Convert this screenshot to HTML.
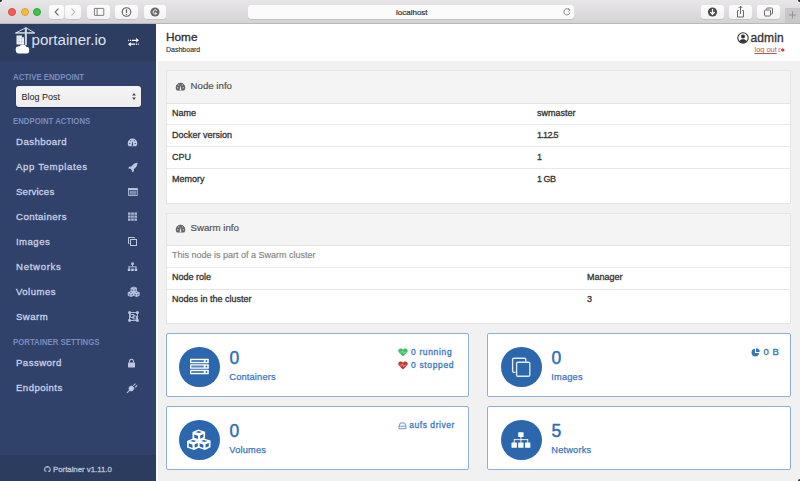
<!DOCTYPE html>
<html><head><meta charset="utf-8">
<style>
*{margin:0;padding:0;box-sizing:border-box}
html,body{width:800px;height:481px;overflow:hidden;background:#f1f1f1;font-family:"Liberation Sans",sans-serif}
.a{position:absolute;white-space:nowrap;line-height:1}
#tb{position:absolute;left:0;top:0;width:800px;height:24px;background:linear-gradient(#e8e6e8,#d4d2d4);border-bottom:1px solid #b9b7b9}
.tl{position:absolute;top:8px;width:8px;height:8px;border-radius:50%}
.btn{position:absolute;top:5px;height:14px;background:linear-gradient(#fdfdfd,#f3f3f3);border-radius:3px;box-shadow:0 0.5px 0.5px rgba(0,0,0,.18)}
#side{position:absolute;left:0;top:24px;width:156px;height:457px;background:#30426a}
#sidehead{position:absolute;left:0;top:0;width:156px;height:37px;background:#2d3d62}
#sidefoot{position:absolute;left:0;top:431px;width:156px;height:26px;background:#2c3c5e}
.st{font-size:7.8px;color:#7a8cbb;left:13px;font-weight:bold;transform:scaleY(1.18);transform-origin:0 80%}
.si{font-size:9.6px;color:#c9d0e2;left:16px;letter-spacing:.45px;-webkit-text-stroke:.3px #c9d0e2;margin-top:.4px}
.ic{position:absolute}
#hdr{position:absolute;left:156px;top:24px;width:644px;height:37px;background:#fff}
.panel{position:absolute;left:166px;width:625px;background:#fff;border:1px solid #e6e6e6}
.ph{position:absolute;left:0;top:0;width:100%;background:#f4f4f4;border-bottom:1px solid #e2e2e2}
.row{position:absolute;left:0;width:100%;border-top:1px solid #e8e8e8}
.tx{font-size:9px;color:#333;-webkit-text-stroke:.3px #333}
.box{position:absolute;width:303px;height:63px;border:1px solid transparent}
.bx{position:absolute;background:#fff;border:1px solid #8db0d8;border-radius:2px}
.circ{position:absolute;left:12px;top:11.5px;width:40.5px;height:40.5px;border-radius:50%;background:#2c67ae}
.num{position:absolute;left:62.5px;top:15.2px;font-size:17.5px;color:#2d6db5;line-height:1;-webkit-text-stroke:.45px #2d6db5}
.lbl{position:absolute;left:62.3px;top:38px;font-size:9.3px;color:#3a78bd;line-height:1;letter-spacing:.15px;-webkit-text-stroke:.25px #3a78bd}
</style></head><body>

<!-- Safari toolbar -->
<div id="tb">
  <div class="tl" style="left:8px;background:#fc5b57;border:0.5px solid #e0443e"></div>
  <div class="tl" style="left:20.5px;background:#f6b940;border:0.5px solid #dea034"></div>
  <div class="tl" style="left:33px;background:#3ec24a;border:0.5px solid #2aab36"></div>
  <div class="btn" style="left:49px;width:15px"></div>
  <div class="btn" style="left:65px;width:16px"></div>
  <div class="btn" style="left:87px;width:23px"></div>
  <div class="btn" style="left:115px;width:23px"></div>
  <div class="btn" style="left:144px;width:22px"></div>
  <div class="btn" style="left:248px;width:326px;background:#fbfbfb"></div>
  <div class="btn" style="left:701px;width:23px"></div>
  <div class="btn" style="left:729px;width:23px"></div>
  <div class="btn" style="left:757px;width:23px"></div>
  <div style="position:absolute;left:785px;top:8px;width:15px;height:15px;background:#c9c7c9"></div>
  <div class="a" style="left:396px;top:9px;font-size:8px;color:#303030;-webkit-text-stroke:.2px #303030">localhost</div>
  <svg class="ic" style="left:49px;top:5px" width="32" height="14" viewBox="0 0 32 14" fill="none" stroke-width="1.1" stroke-linecap="round" stroke-linejoin="round">
    <path d="M9.2 3.8 6.2 7 9.2 10.2" stroke="#6a6a6a"/>
    <path d="M22.8 3.8 25.8 7 22.8 10.2" stroke="#b9b9b9"/>
  </svg>
  <svg class="ic" style="left:87px;top:5px" width="23" height="14" viewBox="0 0 23 14" fill="none" stroke="#707070" stroke-width=".9">
    <rect x="7.4" y="3.4" width="9.4" height="7" rx=".4"/><path d="M10.1 3.4v7"/>
  </svg>
  <svg class="ic" style="left:115px;top:5px" width="23" height="14" viewBox="0 0 23 14">
    <circle cx="11.5" cy="7" r="4.3" fill="none" stroke="#5f5f5f" stroke-width="1.1"/>
    <rect x="10.9" y="4.3" width="1.2" height="3.6" fill="#5f5f5f"/><circle cx="11.5" cy="9.3" r=".65" fill="#5f5f5f"/>
  </svg>
  <svg class="ic" style="left:144px;top:5px" width="22" height="14" viewBox="0 0 22 14">
    <circle cx="11" cy="7" r="4.6" fill="#6b6b6b"/>
    <path d="M12.8 5.6A2.1 2.1 0 1 0 12.9 8.3H11.3V7.2" fill="none" stroke="#f4f4f4" stroke-width="1"/>
  </svg>
  <svg class="ic" style="left:562px;top:6px" width="10" height="12" viewBox="0 0 10 12" fill="none" stroke="#7a7a7a" stroke-width="0.9">
    <path d="M7.6 4.2A3.1 3.1 0 1 0 8 6.5"/><path d="M6 2.3 8 3.9 6.4 5.7" stroke-width="0.8"/>
  </svg>
  <svg class="ic" style="left:701px;top:5px" width="23" height="14" viewBox="0 0 23 14">
    <circle cx="11.5" cy="7" r="4.6" fill="#4b4b4b"/>
    <path d="M11.5 4v5M9.3 7 11.5 9.3 13.7 7" fill="none" stroke="#fff" stroke-width="1.2"/>
  </svg>
  <svg class="ic" style="left:729px;top:4px" width="23" height="15" viewBox="0 0 23 15" fill="none" stroke="#6a6a6a" stroke-width="1">
    <path d="M9.8 6.5H8.5v6.5h6V6.5h-1.3"/><path d="M11.5 10V2.3M9.7 4 11.5 2.2 13.3 4"/>
  </svg>
  <svg class="ic" style="left:757px;top:5px" width="23" height="14" viewBox="0 0 23 14" fill="none" stroke="#6a6a6a" stroke-width="1">
    <rect x="7.5" y="5" width="6" height="6" rx=".8"/><path d="M9.5 4.5V3.8a.8.8 0 0 1 .8-.8h4.4a.8.8 0 0 1 .8.8v4.4a.8.8 0 0 1-.8.8H14"/>
  </svg>
  <svg class="ic" style="left:785px;top:8px" width="15" height="15" viewBox="0 0 15 15" fill="none" stroke="#8f8f8f" stroke-width="0.9">
    <path d="M7.5 3.5v7M4 7h7"/>
  </svg>
</div>

<!-- Sidebar -->
<div id="side">
  <div id="sidehead"></div>
  <div id="sidefoot"></div>
</div>
<!-- logo -->
<svg class="ic" style="left:14px;top:26px" width="22" height="30" viewBox="0 0 22 30">
  <path d="M1.6 7 L11.9 1.7 L20.6 6.9" fill="none" stroke="#e6e9f0" stroke-width=".9"/>
  <rect x="1.5" y="6.3" width="19.1" height="1.3" fill="#f2f4f8"/>
  <rect x="10.8" y="1.6" width="2.1" height="17.5" fill="#cfd5e1"/>
  <path d="M2.5 9.6H8V11.2H10V18.6H2.5Z" fill="#f4f6fa"/>
  <path d="M2.5 12.6H10M2.5 15.4H10M5 9.6V18.6M7.6 9.6V18.6" stroke="#9aa5bd" stroke-width=".45" opacity=".7"/>
  <g fill="#fff"><circle cx="5" cy="23.6" r="3.3"/><circle cx="8.8" cy="21.8" r="3.4"/><circle cx="12.3" cy="23.6" r="2.9"/><rect x="2.2" y="23" width="12.9" height="4.6" rx="2.3"/></g>
</svg>
<div class="a" style="left:31.5px;top:31.8px;font-size:15.1px;color:#dde1ea;letter-spacing:0px">portainer.io</div>
<svg class="ic" style="left:127px;top:37px" width="13" height="11" viewBox="0 0 13 11" fill="#fff">
  <path d="M1.2 2.8h1v1.1h-1zM3 2.8h1v1.1H3zM4.8 2.8h4.4V1.1L12 3.35 9.2 5.6V3.9H4.8z"/>
  <path d="M11.8 6.6h-1v1.1h1zM10 6.6H9v1.1h1zM8.2 6.6H3.8V4.9L1 7.15 3.8 9.4V7.7h4.4z"/>
</svg>

<div class="a st" style="top:74.2px">ACTIVE ENDPOINT</div>
<div style="position:absolute;left:16px;top:86px;width:125px;height:21px;border-radius:3px;background:linear-gradient(#f6f6f6,#ececec);box-shadow:0 1px 1px rgba(0,0,0,.35)"></div>
<div class="a" style="left:21.5px;top:92.5px;font-size:9px;color:#222">Blog Post</div>
<svg class="ic" style="left:131px;top:92px" width="6" height="9" viewBox="0 0 6 9" fill="#444"><path d="M3 1L4.9 3.6H1.1zM3 8L4.9 5.4H1.1z"/></svg>
<div class="a st" style="top:117.8px">ENDPOINT ACTIONS</div>

<div class="a si" style="top:136.5px">Dashboard</div>
<div class="a si" style="top:161.5px;letter-spacing:.65px">App Templates</div>
<div class="a si" style="top:186.5px;letter-spacing:.2px">Services</div>
<div class="a si" style="top:211.5px">Containers</div>
<div class="a si" style="top:236.5px">Images</div>
<div class="a si" style="top:261.5px;letter-spacing:.7px">Networks</div>
<div class="a si" style="top:286.5px">Volumes</div>
<div class="a si" style="top:311.5px">Swarm</div>
<div class="a st" style="top:339.2px">PORTAINER SETTINGS</div>
<div class="a si" style="top:357.3px">Password</div>
<div class="a si" style="top:382.2px">Endpoints</div>

<!-- sidebar icons -->
<svg class="ic" style="left:127px;top:137px" width="11" height="11" viewBox="0 0 11 11" fill="#bcc7e0">
  <path d="M5.5 1.5A4.8 4.8 0 0 0 0.7 6.3c0 1.2.4 2.2 1.1 3h7.4c.7-.8 1.1-1.8 1.1-3A4.8 4.8 0 0 0 5.5 1.5z"/><path d="M5.5 8.9 4.6 8.3 5.8 3.9 6.2 8.4z" fill="#30426a"/><path d="M2 6h1.3v.9H2zM7.7 6H9v.9H7.7zM3 3.5l.8-.6.7.9-.8.6zM7.2 2.9l.8.6-.7.9-.8-.6z" fill="#30426a" opacity=".8"/>
</svg>
<svg class="ic" style="left:128px;top:162px" width="10" height="11" viewBox="0 0 10 11" fill="#bcc7e0">
  <path d="M9.5 0.8C7 0.8 4.8 2.3 3.5 4.5L1 4.8 0.3 6.5 2.5 6.7 3.8 8 4 10.2 5.7 9.5 6 7C8.2 5.7 9.5 3.5 9.5 0.8z"/>
</svg>
<svg class="ic" style="left:127px;top:187px" width="11" height="10" viewBox="0 0 11 10">
  <rect x="1.5" y="1.5" width="8.8" height="7" fill="none" stroke="#bcc7e0" stroke-width=".9" opacity=".9"/>
  <rect x="1.5" y="1.5" width="8.8" height="1.6" fill="#bcc7e0"/>
  <rect x="2.5" y="3.8" width="6.8" height="4" fill="#bcc7e0" opacity=".55"/>
</svg>
<svg class="ic" style="left:127px;top:211px" width="11" height="11" viewBox="0 0 11 11" fill="#bcc7e0">
  <path d="M1 1.5h2.6v2.3H1zM4.2 1.5h2.6v2.3H4.2zM7.4 1.5h2.6v2.3H7.4zM1 4.5h2.6v2.3H1zM4.2 4.5h2.6v2.3H4.2zM7.4 4.5h2.6v2.3H7.4zM1 7.5h2.6v2.3H1zM4.2 7.5h2.6v2.3H4.2zM7.4 7.5h2.6v2.3H7.4z" opacity=".9"/>
</svg>
<svg class="ic" style="left:127px;top:236px" width="11" height="11" viewBox="0 0 11 11" fill="none" stroke="#bcc7e0" stroke-width="1">
  <path d="M2.5 7.5H1.5V1.5h6v1"/>
  <rect x="3.5" y="3.5" width="6" height="6"/>
</svg>
<svg class="ic" style="left:127px;top:262px" width="11" height="10" viewBox="0 0 11 10" fill="#bcc7e0">
  <rect x="4.2" y="0.5" width="2.6" height="2.4"/><rect x="5.1" y="2.5" width="0.9" height="2.2"/>
  <rect x="1.5" y="4.4" width="8" height="0.9"/><rect x="1.6" y="4.4" width="0.9" height="2.5"/><rect x="8.5" y="4.4" width="0.9" height="2.5"/>
  <rect x="0.8" y="6.6" width="2.5" height="2.4"/><rect x="4.2" y="6.6" width="2.6" height="2.4"/><rect x="7.7" y="6.6" width="2.5" height="2.4"/>
</svg>
<svg class="ic" style="left:124px;top:282px" width="20" height="20" viewBox="124 282 20 20"><polygon points="130.55,287.90 133.45,286.60 136.85,287.70 136.85,291.00 134.10,292.40 130.55,291.20" fill="#bcc7e0"/><polygon points="132.18,287.94 133.50,287.42 135.22,287.86 133.94,288.38" fill="#30426a" opacity=".6"/><polygon points="131.47,289.12 133.23,289.76 133.23,291.32 131.47,290.64" fill="#30426a" opacity=".6"/><polygon points="134.44,289.61 135.96,288.97 135.96,290.49 134.44,291.17" fill="#30426a" opacity=".6"/><polygon points="127.75,292.40 130.65,291.10 134.05,292.20 134.05,295.50 131.30,296.90 127.75,295.70" fill="#bcc7e0"/><polygon points="129.38,292.44 130.70,291.92 132.42,292.36 131.14,292.88" fill="#30426a" opacity=".6"/><polygon points="128.67,293.62 130.43,294.26 130.43,295.82 128.67,295.14" fill="#30426a" opacity=".6"/><polygon points="131.64,294.11 133.16,293.47 133.16,294.99 131.64,295.67" fill="#30426a" opacity=".6"/><polygon points="133.35,292.40 136.25,291.10 139.65,292.20 139.65,295.50 136.90,296.90 133.35,295.70" fill="#bcc7e0"/><polygon points="134.98,292.44 136.30,291.92 138.02,292.36 136.74,292.88" fill="#30426a" opacity=".6"/><polygon points="134.27,293.62 136.03,294.26 136.03,295.82 134.27,295.14" fill="#30426a" opacity=".6"/><polygon points="137.24,294.11 138.76,293.47 138.76,294.99 137.24,295.67" fill="#30426a" opacity=".6"/></svg>
<svg class="ic" style="left:128px;top:311px" width="11" height="11" viewBox="0 0 11 11" fill="none" stroke="#bcc7e0" stroke-width="0.9">
  <rect x="1.5" y="1.5" width="8" height="8"/>
  <path d="M2.5 3.5h3.5v3h-3.5zM5 5h3.5v3H5z"/>
  <path d="M0.7 0.7h1.8v1.8H0.7zM8.5 0.7h1.8v1.8H8.5zM0.7 8.5h1.8v1.8H0.7zM8.5 8.5h1.8v1.8H8.5z" fill="#bcc7e0"/>
</svg>
<svg class="ic" style="left:127px;top:358px" width="9" height="10" viewBox="0 0 9 10" fill="#bcc7e0">
  <path d="M2 4.5V3.2a2.5 2.5 0 0 1 5 0V4.5H6V3.2a1.5 1.5 0 0 0-3 0V4.5z"/>
  <rect x="1" y="4.5" width="7" height="5" rx=".6"/>
</svg>
<svg class="ic" style="left:126px;top:382px" width="12" height="12" viewBox="0 0 12 12" fill="#bcc7e0">
  <path d="M6 3.5 8.5 6 7.5 8C6.8 9.3 5 9.6 3.8 8.7L1.3 11.2 0.6 10.5 3.1 8C2.2 6.8 2.5 5 3.8 4.3z"/>
  <path d="M7 3.2 9 1.2 9.8 2 7.8 4zM8.8 5 10.8 3 11.6 3.8 9.6 5.8z"/>
</svg>

<!-- footer -->
<svg class="ic" style="left:44.3px;top:465.6px" width="6.8" height="6.8" viewBox="0 0 16 16" fill="#aab4cf"><path d="M8 0C3.58 0 0 3.58 0 8c0 3.54 2.29 6.53 5.47 7.59.4.07.55-.17.55-.38 0-.19-.01-.82-.01-1.49-2.01.37-2.53-.49-2.69-.94-.09-.23-.48-.94-.82-1.13-.28-.15-.68-.52-.01-.53.63-.01 1.08.58 1.23.82.72 1.21 1.87.87 2.33.66.07-.52.28-.87.51-1.07-1.78-.2-3.64-.89-3.64-3.95 0-.87.31-1.59.82-2.15-.08-.2-.36-1.02.08-2.12 0 0 .67-.21 2.200.82.64-.18 1.32-.27 2-.27.68 0 1.36.09 2 .27 1.53-1.04 2.2-.82 2.2-.82.44 1.1.16 1.92.08 2.12.51.56.82 1.27.82 2.15 0 3.07-1.87 3.75-3.650 3.95.29.25.54.73.54 1.48 0 1.07-.01 1.93-.01 2.2 0 .21.15.46.55.38A8.013 8.013 0 0 0 16 8c0-4.42-3.58-8-8-8z"/></svg>
<div class="a" style="left:53px;top:465.5px;font-size:7.8px;color:#b7c0d8;-webkit-text-stroke:.3px #b7c0d8">Portainer v1.11.0</div>

<!-- header -->
<div id="hdr"></div>
<div style="position:absolute;left:156px;top:61px;width:2px;height:420px;background:#fbfbfb"></div>
<div class="a" style="left:166px;top:32px;font-size:11.8px;color:#333;-webkit-text-stroke:.35px #333">Home</div>
<div class="a" style="left:166px;top:46px;font-size:7px;color:#333;-webkit-text-stroke:.15px #333">Dashboard</div>

<!-- Panel 1 -->
<div class="panel" style="top:70px;height:134px">
  <div class="ph" style="height:33px"></div>
</div>

<!-- Panel 2 -->
<div class="panel" style="top:213px;height:111px">
  <div class="ph" style="height:32px"></div>
</div>

<!-- panel content -->
<svg class="ic" style="left:175px;top:82px" width="11" height="10" viewBox="0 0 11 10" fill="#666">
  <path d="M5.5 0.8A4.8 4.8 0 0 0 0.7 5.6c0 1.2.4 2.2 1.1 3h7.4c.7-.8 1.1-1.8 1.1-3A4.8 4.8 0 0 0 5.5 0.8z"/><path d="M5.5 8.2 4.6 7.6 5.8 3.2 6.2 7.7z" fill="#f4f4f4"/><path d="M2 5.3h1.3v.9H2zM7.7 5.3H9v.9H7.7zM3 2.8l.8-.6.7.9-.8.6zM7.2 2.2l.8.6-.7.9-.8-.6z" fill="#f4f4f4" opacity=".8"/>
</svg>
<div class="a" style="left:190.5px;top:80.8px;font-size:9.7px;color:#555;-webkit-text-stroke:.2px #555">Node info</div>
<div class="a tx" style="left:172px;top:109px">Name</div>
<div class="a tx" style="left:537px;top:109px">swmaster</div>
<div class="row" style="left:166px;top:124px;width:625px"></div>
<div class="a tx" style="left:172px;top:131px">Docker version</div>
<div class="a tx" style="left:537px;top:131px;letter-spacing:-.7px">1.12.5</div>
<div class="row" style="left:166px;top:146px;width:625px"></div>
<div class="a tx" style="left:172px;top:153px">CPU</div>
<div class="a tx" style="left:537px;top:153px">1</div>
<div class="row" style="left:166px;top:168px;width:625px"></div>
<div class="a tx" style="left:172px;top:175px">Memory</div>
<div class="a tx" style="left:537px;top:175px;letter-spacing:-.5px">1 GB</div>

<svg class="ic" style="left:175px;top:224px" width="11" height="10" viewBox="0 0 11 10" fill="#666">
  <path d="M5.5 0.8A4.8 4.8 0 0 0 0.7 5.6c0 1.2.4 2.2 1.1 3h7.4c.7-.8 1.1-1.8 1.1-3A4.8 4.8 0 0 0 5.5 0.8z"/><path d="M5.5 8.2 4.6 7.6 5.8 3.2 6.2 7.7z" fill="#f4f4f4"/><path d="M2 5.3h1.3v.9H2zM7.7 5.3H9v.9H7.7zM3 2.8l.8-.6.7.9-.8.6zM7.2 2.2l.8.6-.7.9-.8-.6z" fill="#f4f4f4" opacity=".8"/>
</svg>
<div class="a" style="left:190.5px;top:222.8px;font-size:9.7px;color:#555;-webkit-text-stroke:.2px #555">Swarm info</div>
<div class="a tx" style="left:172px;top:251px;color:#838383;-webkit-text-stroke:.15px #838383">This node is part of a Swarm cluster</div>
<div class="row" style="left:166px;top:267px;width:625px"></div>
<div class="a tx" style="left:172px;top:273px">Node role</div>
<div class="a tx" style="left:587px;top:273px">Manager</div>
<div class="row" style="left:166px;top:289px;width:625px"></div>
<div class="a tx" style="left:172px;top:295px">Nodes in the cluster</div>
<div class="a tx" style="left:587px;top:295px">3</div>


<!-- user -->
<svg class="ic" style="left:736.5px;top:32px" width="12" height="12" viewBox="0 0 12 12">
  <circle cx="6" cy="6" r="5.2" fill="none" stroke="#333" stroke-width="1.1"/>
  <circle cx="6" cy="4.6" r="2" fill="#333"/>
  <path d="M2.3 9.3C3 7.8 4.3 7.2 6 7.2s3 .6 3.7 2.1A5 5 0 0 1 2.3 9.3z" fill="#333"/>
</svg>
<div class="a" style="left:750.5px;top:32px;font-size:12px;color:#333;letter-spacing:.1px;-webkit-text-stroke:.3px #333">admin</div>
<div class="a" style="left:754.5px;top:45.5px;font-size:7.4px;color:#c4524f;text-decoration:underline;text-decoration-thickness:.6px;text-underline-offset:.6px;text-decoration-skip-ink:none">log out</div>
<svg class="ic" style="left:778px;top:47px" width="7" height="6" viewBox="0 0 7 6" fill="#c9302c"><path d="M0.5 1h2v.8H1.3v2.4h1.2V5h-2z" opacity=".6"/><path d="M3 2.3h1.5V0.8L6.8 3 4.5 5.2V3.7H3z"/></svg>

<div class="bx" style="left:166px;top:333px;width:303px;height:64px"></div>
<div class="bx" style="left:487px;top:333px;width:304px;height:64px"></div>
<div class="bx" style="left:166px;top:406px;width:303px;height:64px"></div>
<div class="bx" style="left:487px;top:406px;width:304px;height:64px"></div>
<!-- Stat boxes -->
<div class="box" style="left:166px;top:334px"><div class="circ"></div><div class="num">0</div><div class="lbl">Containers</div>
  
  <svg class="ic" style="left:231px;top:13px" width="10" height="9" viewBox="0 0 10 9" fill="#3fbf6a"><path d="M5 8.6 0.9 4.5C-0.3 3.2.3.6 2.5.5 3.6.4 4.5 1 5 1.8 5.5 1 6.4.4 7.5.5 9.7.6 10.3 3.2 9.1 4.5z"/><path d="M1.5 4.3h2l1-1.5 1.2 3 1-1.5h2" fill="none" stroke="#fff" stroke-width=".6" opacity=".6"/></svg>
  <div class="a" style="left:244px;top:13.3px;font-size:8.5px;color:#3a78bd;letter-spacing:.65px;-webkit-text-stroke:.3px #3a78bd">0 running</div>
  <svg class="ic" style="left:231px;top:26px" width="10" height="9" viewBox="0 0 10 9" fill="#c0392b"><path d="M5 8.6 0.9 4.5C-0.3 3.2.3.6 2.5.5 3.6.4 4.5 1 5 1.8 5.5 1 6.4.4 7.5.5 9.7.6 10.3 3.2 9.1 4.5z"/><path d="M1.5 4.3h2l1-1.5 1.2 3 1-1.5h2" fill="none" stroke="#fff" stroke-width=".6" opacity=".7"/></svg>
  <div class="a" style="left:244px;top:26.3px;font-size:8.5px;color:#3a78bd;letter-spacing:.65px;-webkit-text-stroke:.3px #3a78bd">0 stopped</div>
</div>
<div class="box" style="left:488px;top:334px"><div class="circ"></div><div class="num">0</div><div class="lbl">Images</div>
  
  <svg class="ic" style="left:262px;top:13px" width="9" height="9" viewBox="0 0 9 9" fill="#3a78bd"><path d="M4 0.8A3.8 3.8 0 1 0 8.1 5H4z"/><path d="M5 0.2V4h3.8A3.8 3.8 0 0 0 5 0.2z"/></svg>
  <div class="a" style="left:274.5px;top:11.6px;font-size:9.5px;color:#3a78bd;letter-spacing:.5px;-webkit-text-stroke:.35px #3a78bd">0 B</div>
</div>
<div class="box" style="left:166px;top:407px"><div class="circ"></div><div class="num">0</div><div class="lbl">Volumes</div>
  
  <svg class="ic" style="left:231px;top:13.5px" width="9" height="8" viewBox="0 0 9 8" fill="none" stroke="#5a8cc6" stroke-width=".9"><path d="M1 4.2 2.3 1h4.4L8 4.2v2.5H1z"/><path d="M1 4.2h7"/></svg>
  <div class="a" style="left:242.2px;top:13.3px;font-size:8.5px;color:#3a78bd;letter-spacing:.55px;-webkit-text-stroke:.3px #3a78bd">aufs driver</div>
</div>
<div class="box" style="left:488px;top:407px"><div class="circ"></div><div class="num">5</div><div class="lbl">Networks</div>
  
</div>

<svg class="ic" style="left:180px;top:420px" width="40" height="40" viewBox="180 420 40 40"><polygon points="192.50,432.10 198.30,429.50 205.10,431.70 205.10,438.30 199.60,441.10 192.50,438.70" fill="#fff"/><polygon points="195.57,432.19 198.38,431.08 202.03,432.01 199.31,433.12" fill="#2c67ae"/><polygon points="194.23,434.41 197.97,435.77 197.97,439.08 194.23,437.64" fill="#2c67ae"/><polygon points="200.19,435.47 203.42,434.11 203.42,437.34 200.19,438.78" fill="#2c67ae"/><polygon points="187.00,441.00 192.80,438.40 199.60,440.60 199.60,447.20 194.10,450.00 187.00,447.60" fill="#fff"/><polygon points="190.07,441.08 192.88,439.98 196.53,440.91 193.81,442.02" fill="#2c67ae"/><polygon points="188.73,443.31 192.47,444.67 192.47,447.98 188.73,446.54" fill="#2c67ae"/><polygon points="194.69,444.37 197.92,443.01 197.92,446.24 194.69,447.68" fill="#2c67ae"/><polygon points="197.90,441.00 203.70,438.40 210.50,440.60 210.50,447.20 205.00,450.00 197.90,447.60" fill="#fff"/><polygon points="200.97,441.08 203.78,439.98 207.43,440.91 204.71,442.02" fill="#2c67ae"/><polygon points="199.63,443.31 203.37,444.67 203.37,447.98 199.63,446.54" fill="#2c67ae"/><polygon points="205.58,444.37 208.81,443.01 208.81,446.24 205.58,447.68" fill="#2c67ae"/></svg>
<svg class="ic" style="left:185px;top:355px" width="30" height="25" viewBox="185 355 30 25"><rect x="190" y="358.8" width="18.8" height="4.4" rx=".4" fill="#fff"/><rect x="191.3" y="360.0" width="12.5" height="2" fill="#2c67ae" opacity=".8"/><rect x="205.6" y="360.1" width="1.6" height="1.8" fill="#2c67ae"/><rect x="190" y="364.3" width="18.8" height="4.4" rx=".4" fill="#fff"/><rect x="191.3" y="365.5" width="12.5" height="2" fill="#2c67ae" opacity=".8"/><rect x="205.6" y="365.6" width="1.6" height="1.8" fill="#2c67ae"/><rect x="190" y="369.8" width="18.8" height="4.4" rx=".4" fill="#fff"/><rect x="191.3" y="371.0" width="12.5" height="2" fill="#2c67ae" opacity=".8"/><rect x="205.6" y="371.1" width="1.6" height="1.8" fill="#2c67ae"/></svg>
<svg class="ic" style="left:505px;top:350px" width="32" height="32" viewBox="505 350 32 32" fill="none" stroke="#e4ebf5" stroke-width="1.35">
<path d="M515.5 372.3H513.9a1.3 1.3 0 0 1-1.3-1.3V359.5a1.3 1.3 0 0 1 1.3-1.3h10.6a1.3 1.3 0 0 1 1.3 1.3v2.3"/>
<rect x="516.6" y="362.2" width="13.2" height="14" rx="1.3"/>
</svg>
<svg class="ic" style="left:505px;top:425px" width="32" height="30" viewBox="505 425 32 30" fill="#fff">
<rect x="518.2" y="432.2" width="5.4" height="4.9" rx=".5"/><rect x="520.5" y="436.8" width=".9" height="5.9"/>
<rect x="514" y="439.2" width="14" height=".9"/><rect x="513.8" y="439.2" width=".9" height="3.5"/><rect x="527.3" y="439.2" width=".9" height="3.5"/>
<rect x="511.5" y="442.5" width="5.4" height="5.3" rx=".5"/><rect x="518.2" y="442.5" width="5.4" height="5.3" rx=".5"/><rect x="525" y="442.5" width="5.4" height="5.3" rx=".5"/>
</svg>
<div style="position:absolute;left:0;top:0;width:2px;height:2px;background:#222;border-bottom-right-radius:2px"></div>
<div style="position:absolute;right:0;top:0;width:2px;height:2px;background:#222;border-bottom-left-radius:2px"></div>
<div style="position:absolute;right:0;bottom:0;width:2px;height:2px;background:#333;border-top-left-radius:2px"></div>
</body></html>
